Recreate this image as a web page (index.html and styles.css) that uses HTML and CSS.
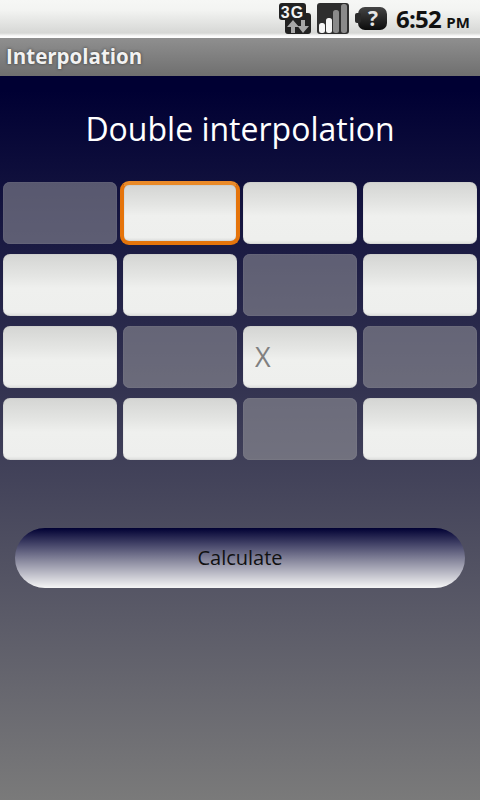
FILE: index.html
```html
<!DOCTYPE html>
<html lang="en">
<head>
  <meta charset="UTF-8" />
  <title>Interpolation</title>
  <link rel="stylesheet" href="styles.css">
</head>
<body>

<div class="status-bar">
  <svg class="status-icon" width="32" height="36" viewBox="0 0 32 36">
    <rect x="6" y="13" width="26" height="21" rx="3" fill="#222"/>
    <rect x="0" y="3" width="27" height="17" rx="3" fill="#222"/>
    <text class="icon-3g-text" x="13.500" y="17.500">3G</text>
    <path d="M12 33v-6H8l6-7 6 7h-4v6z" fill="#a8a8a8"/>
    <path d="M22 20v6h-3.500l5.500 7 6-7h-4v-6z" fill="#a8a8a8"/>
  </svg>
  <svg class="status-icon" width="32" height="36" viewBox="0 0 32 36">
    <rect x="0" y="3" width="32" height="31" rx="3" fill="#2e2e2e"/>
    <rect x="2" y="23" width="6" height="10" rx="2.500" fill="#f6f6f6"/>
    <rect x="9" y="18" width="6" height="15" rx="2.500" fill="#f6f6f6"/>
    <rect x="16" y="10" width="6" height="23" rx="2.500" fill="#8a8a8a"/>
    <rect x="24" y="4" width="6" height="29" rx="2.500" fill="#8a8a8a"/>
  </svg>
  <svg class="status-icon sim" width="32" height="36" viewBox="0 0 32 36">
    <defs>
      <linearGradient id="simFill" x1="0" y1="0" x2="0" y2="1">
        <stop offset="0" stop-color="#444"/>
        <stop offset="1" stop-color="#0c0c0c"/>
      </linearGradient>
    </defs>
    <rect x="3" y="7" width="29" height="23" rx="7" fill="url(#simFill)"/>
    <rect x="0" y="13" width="6" height="10" rx="2" fill="#2a2a2a"/>
    <text class="icon-sim-text" x="18" y="26">?</text>
  </svg>
  <div class="clock">6:52 <span class="ampm">PM</span></div>
</div>

<div class="title-bar">Interpolation</div>

<main class="content">
  <h1 class="heading">Double interpolation</h1>

  <div class="grid">
    <input class="cell off" disabled>
    <input class="cell focused">
    <input class="cell">
    <input class="cell">

    <input class="cell">
    <input class="cell">
    <input class="cell off" disabled>
    <input class="cell">

    <input class="cell">
    <input class="cell off" disabled>
    <input class="cell x" placeholder="X">
    <input class="cell off" disabled>

    <input class="cell">
    <input class="cell">
    <input class="cell off" disabled>
    <input class="cell">
  </div>

  <button class="calc">Calculate</button>
</main>

</body>
</html>
```

FILE: styles.css
```css
* {
  box-sizing: border-box;
}
body {
  margin: 0;
  width: 480px;
  height: 800px;
  overflow: hidden;
  font-family: "Open Sans", sans-serif;
  background: #000033;
}

/* Status bar */
.status-bar {
  height: 38px;
  display: flex;
  align-items: flex-start;
  gap: 6px;
  padding-left: 279px;
  background: linear-gradient(#f6f7f5 0, #f3f4f2 10px, #d6d7d5 33px, #fafafa 36px, #ffffff 38px);
}
.status-icon {
  flex: none;
}
.status-icon.sim {
  margin-right: 3px;
}
.icon-3g-text {
  fill: #f4f4f4;
  font-family: "Liberation Sans", sans-serif;
  font-size: 16px;
  font-weight: 700;
  letter-spacing: 1px;
  text-anchor: middle;
}
.icon-sim-text {
  fill: #e6e6e6;
  font-size: 21px;
  font-weight: 700;
  text-anchor: middle;
}
.clock {
  color: #111;
  font-size: 24px;
  font-weight: 700;
  letter-spacing: -0.8px;
  line-height: 38px;
  white-space: nowrap;
}
.ampm {
  font-size: 15px;
  letter-spacing: 0;
}

/* Title bar */
.title-bar {
  height: 38px;
  padding-left: 6px;
  background: linear-gradient(#8f8f8f, #6f6f6f);
  color: #f2f2f2;
  font-size: 20.500px;
  font-weight: 700;
  line-height: 37px;
  text-shadow: 0 0 3px #333;
}

/* Main content */
.content {
  height: 724px;
  padding: 0 3px;
  background: linear-gradient(#000033 0, #000033 14px, #7a7a7a 100%);
}
.heading {
  margin: 0;
  height: 106px;
  padding-top: 30px;
  color: #fff;
  font-size: 32px;
  font-weight: 400;
  line-height: 46px;
  text-align: center;
}
.grid {
  display: grid;
  grid-template-columns: repeat(4, 114px);
  grid-auto-rows: 62px;
  column-gap: 6px;
  row-gap: 10px;
}
.cell {
  display: block;
  width: 100%;
  height: 100%;
  padding: 0 12px;
  border: 0;
  border-radius: 7px;
  outline: 0;
  background: linear-gradient(#d4d5d3 0, #e4e5e3 35%, #eff0ee 55%, #eeefed 94%, #dcdddc 100%);
  box-shadow: inset 0 0 1px #999;
  color: #808080;
  font-family: inherit;
  font-size: 27px;
}
.cell.x {
  padding-bottom: 2px;
}
.cell::placeholder {
  color: #808080;
  opacity: 1;
}
.cell.off {
  background: rgba(170, 170, 170, 0.47);
  box-shadow: inset 0 0 1px rgba(220, 220, 220, 0.5);
}
.cell.focused {
  width: 120px;
  height: 64px;
  margin: -1px 0 0 -3px;
  border: 4px solid #e5740b;
  border-top-color: #ea8a28;
  border-radius: 9px;
}
.calc {
  display: block;
  width: 450px;
  height: 60px;
  margin: 68px 0 0 12px;
  padding-bottom: 3px;
  border: 0;
  border-radius: 30px;
  background: linear-gradient(#000033 0, #8a8a9f 55%, #f6f6f6 100%);
  color: #111;
  font-family: inherit;
  font-size: 20px;
}
```
